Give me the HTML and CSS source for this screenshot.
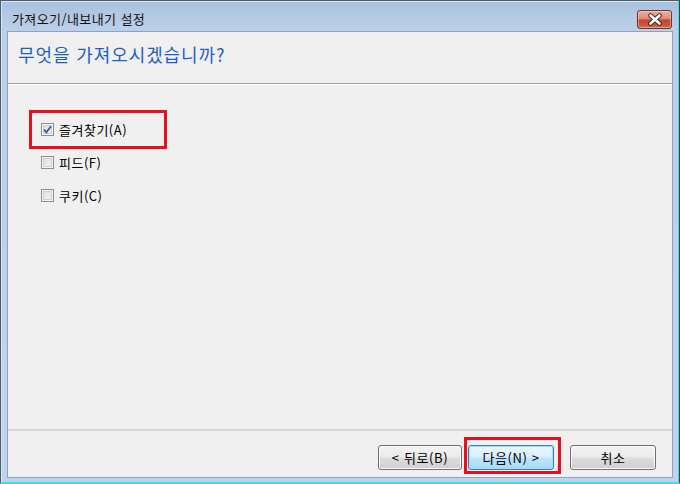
FILE: index.html
```html
<!DOCTYPE html>
<html lang="ko">
<head>
<meta charset="utf-8">
<title>가져오기/내보내기 설정</title>
<link rel="stylesheet" href="styles.css">
</head>
<body>
<div class="window">
  <div class="titlebar">
    <span class="title">가져오기/내보내기 설정</span>
    <button class="close" aria-label="닫기">
      <svg width="18" height="13" viewBox="0 0 18 13">
        <path d="M4.5 2.5 L13.5 10.5 M13.5 2.5 L4.5 10.5" stroke="#4a2a24" stroke-width="4.6" stroke-linecap="round"/>
        <path d="M4.5 2.5 L13.5 10.5 M13.5 2.5 L4.5 10.5" stroke="#ffffff" stroke-width="2.6" stroke-linecap="round"/>
      </svg>
    </button>
  </div>
  <div class="client">
    <div class="header">
      <h1 class="instruction">무엇을 가져오시겠습니까?</h1>
    </div>
    <div class="body">
      <label class="option marked">
        <span class="check">
          <svg width="9" height="9" viewBox="0 0 9 9"><path d="M1 4.6 L3.4 7.4 L8 1.2" fill="none" stroke="#3d5a9c" stroke-width="1.8"/></svg>
        </span>
        <span class="label">즐겨찾기(A)</span>
      </label>
      <label class="option">
        <span class="check"></span>
        <span class="label">피드(F)</span>
      </label>
      <label class="option">
        <span class="check"></span>
        <span class="label">쿠키(C)</span>
      </label>
    </div>
    <div class="footer">
      <button class="btn back">&lt; 뒤로(B)</button>
      <button class="btn primary marked-btn">다음(N) &gt;</button>
      <button class="btn cancel">취소</button>
    </div>
  </div>
</div>
</body>
</html>
```

FILE: styles.css
```css
* { box-sizing: border-box; }
html, body {
  margin: 0;
  padding: 0;
  width: 680px;
  height: 484px;
  overflow: hidden;
  background: #ffffff;
  font-family: "Noto Sans CJK KR", "Noto Sans", sans-serif;
}
.window {
  width: 680px;
  height: 484px;
  border-left: 1px solid #4e5a68;
  border-top: 1px solid #4e5a68;
  border-right: 1px solid #3a4450;
  border-bottom: 2px solid #2ee6f0;
  background: linear-gradient(to bottom, #a9c1dd 0px, #bcd1e9 30px, #bfd4ec 100%);
  padding: 0 6px 4px 6px;
  display: flex;
  flex-direction: column;
  box-shadow: inset -1px 0 0 #33e3ee, inset 1px 1px 0 #d9e6f4;
}
.titlebar {
  height: 30px;
  display: flex;
  align-items: flex-start;
  justify-content: space-between;
  padding-left: 5px;
}
.title {
  font-size: 13px;
  line-height: 13px;
  margin-top: 11px;
  color: #111;
  letter-spacing: 0.4px;
}
.close {
  margin-top: 9px;
  margin-right: 1px;
  width: 35px;
  height: 19px;
  border: 1px solid #6b3428;
  border-radius: 3px;
  padding: 0;
  display: flex;
  align-items: center;
  justify-content: center;
  background: linear-gradient(to bottom, #eab0a3 0%, #dd8c7a 45%, #c6472f 52%, #c85237 80%, #d76e52 100%);
  box-shadow: inset 0 0 0 1px rgba(255,220,210,0.45);
}
.client {
  flex: 1;
  border: 1px solid #8ea4bd;
  background: #f0f0f0;
  display: flex;
  flex-direction: column;
}
.header {
  height: 52px;
  border-bottom: 1px solid #a0a0a0;
  box-shadow: 0 1px 0 #ffffff;
  padding-left: 10px;
}
.instruction {
  margin: 0;
  padding-top: 10px;
  font-weight: normal;
  font-size: 18px;
  line-height: 24px;
  color: #1f5fc0;
  letter-spacing: 0.9px;
}
.body {
  flex: 1;
  padding-top: 29px;
  padding-left: 24px;
  display: flex;
  flex-direction: column;
  border-bottom: 2px solid #d6d6d6;
}
.option {
  position: relative;
  width: 132px;
  height: 33px;
  display: flex;
  align-items: center;
  padding-left: 9px;
  font-size: 13px;
  color: #000;
}
.option.marked::after {
  content: "";
  position: absolute;
  left: -3px;
  top: -3px;
  right: -3px;
  bottom: -3px;
  border: 3px solid #e8101e;
}
.check {
  width: 13px;
  height: 13px;
  border: 1px solid #8e8f8f;
  background: linear-gradient(135deg, #dcdcdc 0%, #f6f6f6 100%);
  box-shadow: inset 0 0 0 1px #f4f4f4, inset 0 0 0 2px #cfd0d2;
  display: flex;
  align-items: center;
  justify-content: center;
  margin-right: 5px;
  flex: none;
}
.label {
  line-height: 16px;
  letter-spacing: 0.5px;
}
.footer {
  height: 46px;
  display: flex;
  align-items: flex-start;
  padding-top: 14px;
  padding-left: 370px;
}
.btn {
  position: relative;
  height: 25px;
  width: 86px;
  border: 1px solid #707070;
  border-radius: 3px;
  font-family: inherit;
  font-size: 13px;
  letter-spacing: 0.6px;
  color: #000;
  padding: 0;
  background: linear-gradient(to bottom, #f2f2f2 0%, #ebebeb 48%, #dddddd 52%, #cfcfcf 100%);
  box-shadow: inset 0 0 0 1px #fcfcfc;
}
.btn.back { width: 84px; }
.btn.primary {
  margin-left: 6px;
  border-color: #3c7fb1;
  background: linear-gradient(to bottom, #eaf6fd 0%, #d9f0fc 48%, #bee6fd 52%, #a7d9f5 100%);
  box-shadow: inset 0 0 0 1px #9ee0fb;
}
.btn.cancel { margin-left: 16px; }
.marked-btn::after {
  content: "";
  position: absolute;
  left: -5px;
  top: -9px;
  right: -8px;
  bottom: -5px;
  border: 3px solid #e8101e;
}
```
